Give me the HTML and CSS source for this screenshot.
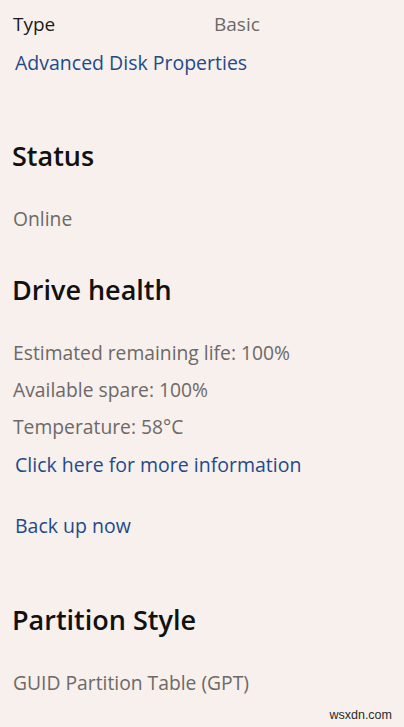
FILE: index.html
```html
<!DOCTYPE html>
<html lang="en">
<head>
<meta charset="utf-8">
<title>Disk properties</title>
<link rel="stylesheet" href="styles.css">
</head>
<body>
<main class="page">
  <div class="prop-row">
    <span class="prop-label">Type</span>
    <span class="prop-value">Basic</span>
  </div>
  <a class="link link-adv" href="#">Advanced Disk Properties</a>

  <h2 class="heading heading-status">Status</h2>
  <p class="line line-first">Online</p>

  <h2 class="heading heading-health">Drive health</h2>
  <p class="line line-first">Estimated remaining life: 100%</p>
  <p class="line">Available spare: 100%</p>
  <p class="line">Temperature: 58°C</p>
  <a class="link link-more" href="#">Click here for more information</a>
  <a class="link link-backup" href="#">Back up now</a>

  <h2 class="heading heading-partition">Partition Style</h2>
  <p class="line line-first">GUID Partition Table (GPT)</p>
</main>
<div class="watermark">wsxdn.com</div>
</body>
</html>
```
FILE: styles.css
```css
html, body {
  margin: 0;
  padding: 0;
  background: #f7f0ec;
}
body {
  width: 404px;
  height: 727px;
  overflow: hidden;
  position: relative;
  font-family: "Open Sans", "Noto Sans", "Liberation Sans", sans-serif;
}
.page {
  padding: 6px 0 0 13px;
  display: flex;
  flex-direction: column;
  align-items: flex-start;
}
.prop-row {
  display: grid;
  grid-template-columns: 201px auto;
  height: 37px;
  line-height: 37px;
  font-size: 19px;
}
.prop-label {
  color: #1b1b1b;
}
.prop-value {
  color: #6d6968;
}
.link {
  display: block;
  color: #1f4a8a;
  text-decoration: none;
  font-size: 19.5px;
  line-height: 37px;
  height: 37px;
  margin-left: 2px;
}
.link-adv {
  margin-top: 1px;
}
.link-more {
  margin-top: 1px;
}
.link-backup {
  margin-top: 24px;
}
.heading {
  margin: 0;
  font-size: 27px;
  font-weight: 600;
  color: #111111;
  line-height: 40px;
  height: 40px;
  margin-left: -1px;
}
.heading-status {
  margin-top: 55px;
}
.heading-health {
  margin-top: 33px;
}
.heading-partition {
  margin-top: 56px;
}
.line {
  margin: 0;
  font-size: 19.3px;
  color: #6d6968;
  line-height: 37px;
  height: 37px;
}
.line-first {
  margin-top: 24px;
}
.watermark {
  position: absolute;
  right: 12px;
  bottom: 3px;
  font-family: "Liberation Sans", sans-serif;
  font-size: 12.5px;
  color: #2a2a2a;
  line-height: 18px;
}
```
